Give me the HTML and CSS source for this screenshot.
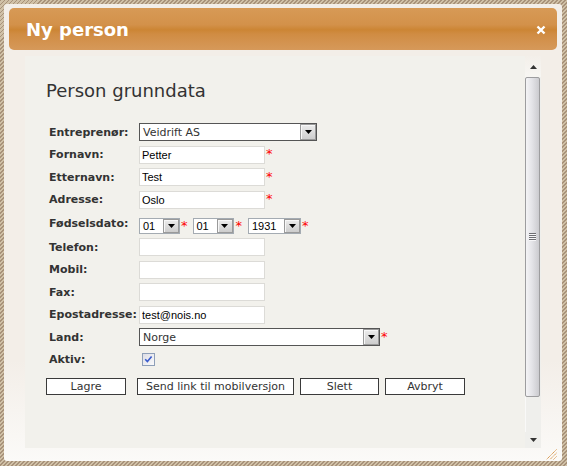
FILE: index.html
```html
<!DOCTYPE html>
<html lang="no">
<head>
<meta charset="utf-8">
<title>Ny person</title>
<link rel="stylesheet" href="styles.css">
</head>
<body>
<div class="dialog">
  <div class="titlebar">
    <span class="title">Ny person</span>
    <svg class="close" width="10" height="10" viewBox="0 0 10 10"><path d="M1.5 1.5L8.5 8.5M8.5 1.5L1.5 8.5" stroke="#fff" stroke-width="2.4" fill="none"/></svg>
  </div>
  <div class="main">
    <div class="panel">
      <h1>Person grunndata</h1>
      <div class="form">
        <div class="row">
          <label>Entreprenør:</label>
          <div class="field">
            <div class="sel dark w-entr"><span class="val">Veidrift AS</span><span class="arrow"><svg width="7" height="4" viewBox="0 0 7 4"><path d="M0 0H7L3.5 4Z" fill="#000"/></svg></span></div>
          </div>
        </div>
        <div class="row">
          <label>Fornavn:</label>
          <div class="field"><input class="text" type="text" value="Petter"><span class="req">*</span></div>
        </div>
        <div class="row">
          <label>Etternavn:</label>
          <div class="field"><input class="text" type="text" value="Test"><span class="req">*</span></div>
        </div>
        <div class="row">
          <label>Adresse:</label>
          <div class="field"><input class="text" type="text" value="Oslo"><span class="req">*</span></div>
        </div>
        <div class="row date">
          <label>Fødselsdato:</label>
          <div class="field shifted">
            <div class="sel light w-day"><span class="val">01</span><span class="arrow"><svg width="7" height="4" viewBox="0 0 7 4"><path d="M0 0H7L3.5 4Z" fill="#000"/></svg></span></div><span class="req gap1">*</span>
            <div class="sel light w-day"><span class="val">01</span><span class="arrow"><svg width="7" height="4" viewBox="0 0 7 4"><path d="M0 0H7L3.5 4Z" fill="#000"/></svg></span></div><span class="req gap2">*</span>
            <div class="sel light w-year"><span class="val">1931</span><span class="arrow"><svg width="7" height="4" viewBox="0 0 7 4"><path d="M0 0H7L3.5 4Z" fill="#000"/></svg></span></div><span class="req">*</span>
          </div>
        </div>
        <div class="row">
          <label>Telefon:</label>
          <div class="field"><input class="text" type="text" value=""></div>
        </div>
        <div class="row">
          <label>Mobil:</label>
          <div class="field"><input class="text" type="text" value=""></div>
        </div>
        <div class="row">
          <label>Fax:</label>
          <div class="field"><input class="text" type="text" value=""></div>
        </div>
        <div class="row">
          <label>Epostadresse:</label>
          <div class="field"><input class="text" type="text" value="test@nois.no"></div>
        </div>
        <div class="row">
          <label>Land:</label>
          <div class="field">
            <div class="sel dark w-land"><span class="val">Norge</span><span class="arrow"><svg width="7" height="4" viewBox="0 0 7 4"><path d="M0 0H7L3.5 4Z" fill="#000"/></svg></span></div><span class="req">*</span>
          </div>
        </div>
        <div class="row">
          <label>Aktiv:</label>
          <div class="field">
            <svg class="check" width="13" height="13" viewBox="0 0 13 13">
              <defs><linearGradient id="cb" x1="0" y1="0" x2="1" y2="1"><stop offset="0" stop-color="#dcdce4"/><stop offset="1" stop-color="#fbfbfc"/></linearGradient></defs>
              <rect x="0.5" y="0.5" width="12" height="12" fill="url(#cb)" stroke="#8e9fb8"/>
              <path d="M3.2 6.2L5.4 8.6L9.6 3.6" stroke="#3a5bcc" stroke-width="1.6" fill="none"/>
            </svg>
          </div>
        </div>
      </div>
      <div class="buttons">
        <button class="btn b-lagre">Lagre</button>
        <button class="btn b-send">Send link til mobilversjon</button>
        <button class="btn b-slett">Slett</button>
        <button class="btn b-avbryt">Avbryt</button>
      </div>
    </div>
    <div class="scrollbar">
      <div class="sb-up"><svg width="7" height="4" viewBox="0 0 7 4"><path d="M3.5 0L7 4H0Z" fill="#333"/></svg></div>
      <div class="sb-thumb"><span class="sb-grip"></span></div>
      <div class="sb-track"></div>
      <div class="sb-down"><svg width="7" height="4" viewBox="0 0 7 4"><path d="M0 0H7L3.5 4Z" fill="#333"/></svg></div>
    </div>
  </div>
  <div class="footer">
    <svg class="resize" width="11" height="11" viewBox="0 0 11 11">
      <path d="M10.5 0.5L0.5 10.5M10.5 4L4 10.5M10.5 7.5L7.5 10.5" stroke="#d48c3c" stroke-width="1" stroke-dasharray="1.2 0.6" fill="none"/>
    </svg>
  </div>
</div>
</body>
</html>
```

FILE: styles.css
```css
html, body {
  margin: 0;
  padding: 0;
}

body {
  width: 567px;
  height: 466px;
  overflow: hidden;
  background: repeating-linear-gradient(135deg, #a8927a 0 1.4px, #d0c1a7 1.4px 2.83px);
  font-family: "DejaVu Sans", Verdana, sans-serif;
}

.dialog {
  margin: 4px;
  width: 558px;
  height: 457px;
  box-sizing: border-box;
  padding: 4px 5px 0 5px;
  border-radius: 3px;
  background: linear-gradient(to bottom, #f3eee8 0%, #f3eee8 78%, #fbfaf8 100%);
  display: flex;
  flex-direction: column;
}

.titlebar {
  height: 42px;
  flex-shrink: 0;
  border-radius: 5px;
  background: linear-gradient(to bottom, #d79a56 0%, #d3914a 40%, #cc8534 52%, #d08c43 62%, #d6995a 100%);
  display: flex;
  align-items: center;
  justify-content: space-between;
  padding: 2px 11px 0 17px;
  box-sizing: border-box;
}

.title {
  color: #fff;
  font-weight: bold;
  font-size: 18px;
  line-height: 22px;
}

.close {
  display: block;
}

.main {
  display: flex;
  margin: 6px 0 0 16px;
  height: 392px;
  flex-shrink: 0;
}

.panel {
  width: 500px;
  box-sizing: border-box;
  background: #f2f1ec;
  padding: 24px 0 0 21px;
}

h1 {
  margin: 0;
  font-size: 18px;
  line-height: 22px;
  font-weight: normal;
  color: #333;
}

.form {
  margin-top: 19px;
}

.row {
  display: flex;
  align-items: center;
  height: 22.5px;
}

.row.date {
  height: 25px;
}

.row label {
  width: 93px;
  flex-shrink: 0;
  box-sizing: border-box;
  padding-left: 3px;
  font-size: 11px;
  font-weight: bold;
  color: #333;
}

.field {
  display: flex;
  align-items: flex-start;
}

.field.shifted {
  margin-top: 4px;
}

.text {
  width: 126px;
  height: 18px;
  box-sizing: border-box;
  margin: 0;
  padding: 0 2px;
  border: 1px solid #dcdbd7;
  background: #fff;
  font-family: "Liberation Sans", Arial, sans-serif;
  font-size: 11px;
  color: #000;
  outline: none;
}

.req {
  color: #f00;
  font-size: 13px;
  font-weight: normal;
  line-height: 13px;
  margin-top: 1.5px;
  margin-left: 1px;
}

.req.gap1 {
  margin-right: 5px;
}

.req.gap2 {
  margin-left: 2px;
  margin-right: 6px;
}

.sel {
  display: flex;
  align-items: center;
  box-sizing: border-box;
  height: 18px;
  background: #fff;
  font-size: 11px;
}

.sel .val {
  flex: 1;
  padding-left: 3px;
  white-space: nowrap;
}

.sel .arrow {
  width: 16px;
  align-self: stretch;
  box-sizing: border-box;
  border: 1px solid #9a9a9a;
  box-shadow: inset 1px 1px 0 #f7f7f7;
  background: linear-gradient(to bottom, #ececec, #cdcdcd);
  display: flex;
  align-items: center;
  justify-content: center;
}

.sel .arrow svg {
  display: block;
}

.sel.dark {
  border: 1px solid #555;
  color: #333;
}

.sel.light {
  height: 16px;
  border: 1px solid #a4abb2;
  font-family: "Liberation Sans", Arial, sans-serif;
  color: #000;
}

.w-entr { width: 178px; }
.w-land { width: 241px; }
.w-day { width: 41px; }
.w-year { width: 53px; }

.check {
  display: block;
  margin-left: 3px;
}

.buttons {
  display: flex;
  margin-top: 7px;
}

.btn {
  height: 17px;
  box-sizing: border-box;
  margin: 0;
  padding: 0;
  border: 1px solid #3a3a3a;
  border-radius: 0;
  background: #fff;
  font-family: "DejaVu Sans", Verdana, sans-serif;
  font-size: 11px;
  line-height: 15px;
  color: #333;
  text-align: center;
}

.b-lagre { width: 80px; }
.b-send { width: 157px; margin-left: 11px; }
.b-slett { width: 79px; margin-left: 6px; }
.b-avbryt { width: 80px; margin-left: 6px; }

.scrollbar {
  width: 16px;
  display: flex;
  flex-direction: column;
  background: #efefec;
}

.sb-up {
  height: 21px;
  display: flex;
  justify-content: center;
  align-items: flex-start;
  padding-top: 9px;
  box-sizing: border-box;
  background: linear-gradient(to bottom, #f3efe9, #f7f6f3);
}

.sb-up svg, .sb-down svg {
  display: block;
}

.sb-thumb {
  height: 320px;
  width: 15px;
  box-sizing: border-box;
  border: 1px solid #9d9d9f;
  border-radius: 2px;
  background: linear-gradient(to right, #f4f4f6 0%, #e4e4e8 45%, #cbcbcf 100%);
  display: flex;
  align-items: center;
  justify-content: center;
}

.sb-grip {
  width: 7px;
  height: 8px;
  margin-left: -1px;
  background: repeating-linear-gradient(to bottom, #6e6e72 0 1px, #f6f6f8 1px 2px);
}

.sb-track {
  flex: 1;
  background: #efefec;
  border-left: 1px solid #f9f9f8;
}

.sb-down {
  height: 16px;
  display: flex;
  justify-content: center;
  padding-top: 6px;
  box-sizing: border-box;
}

.footer {
  height: 13px;
  display: flex;
  justify-content: flex-end;
  align-items: flex-start;
}

.resize {
  display: block;
  margin-top: 1px;
}
```
